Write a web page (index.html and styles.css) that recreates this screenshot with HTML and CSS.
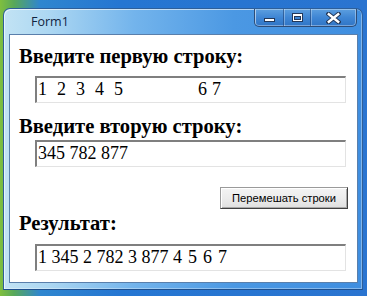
FILE: index.html
```html
<!DOCTYPE html>
<html>
<head>
<meta charset="utf-8">
<link rel="stylesheet" href="styles.css">
</head>
<body>
<div class="desktop">
  <div class="window">
    <div class="titlebar">
      <span class="title">Form1</span>
      <div class="caption">
        <div class="cbtn min"><span class="min-glyph"></span></div>
        <div class="cbtn max"><span class="max-glyph"></span></div>
        <div class="cbtn close">
          <svg width="15" height="12" viewBox="0 0 15 12">
            <path d="M2.5 2 L12.5 10 M12.5 2 L2.5 10" stroke="#23395a" stroke-width="4.4" stroke-linecap="square"/>
            <path d="M2.8 2.3 L12.2 9.7 M12.2 2.3 L2.8 9.7" stroke="#ffffff" stroke-width="2.4" stroke-linecap="square"/>
          </svg>
        </div>
      </div>
    </div>
    <div class="client">
      <div class="label l1">Введите первую строку:</div>
      <div class="field f1">1  2  3  4  5               6 7</div>
      <div class="label l2">Введите вторую строку:</div>
      <div class="field f2">345 782 877</div>
      <div class="button">Перемешать строки</div>
      <div class="label l3">Результат:</div>
      <div class="field f3">1 345 2 782 3 877 <span class="wide">4 5 6 7</span></div>
    </div>
  </div>
</div>
</body>
</html>
```
FILE: styles.css
```css
html, body {
  margin: 0;
  padding: 0;
}
.desktop {
  width: 367px;
  height: 296px;
  overflow: hidden;
  padding-top: 8px;
  box-sizing: border-box;
  background:
    linear-gradient(90deg, #7fbf3e 0px, #58a85a 14px, #2f86cf 40px, #2576d2 120px, #2a74d0 367px);
}
.window {
  margin-left: 3px;
  width: 360px;
  height: 282px;
  box-sizing: border-box;
  border: 1px solid #2e5f99;
  border-bottom-color: #1d4f8e;
  border-radius: 7px 7px 0 0;
  padding: 0 4px 6px 5px;
  background:
    linear-gradient(90deg, #c2e3f4 0px, #acd7f2 45px, #73b4ec 130px, #4b98e3 230px, #3f8ee0 360px);
  box-shadow: inset 1px 1px 0 rgba(255,255,255,0.6), inset -1px -1px 0 rgba(255,255,255,0.35);
  display: flex;
  flex-direction: column;
}
.titlebar {
  height: 25px;
  display: flex;
  justify-content: space-between;
  align-items: flex-start;
  margin-right: 1px;
}
.title {
  font-family: "Open Sans", "DejaVu Sans", sans-serif;
  font-size: 12.5px;
  color: #10243f;
  margin-left: 22px;
  margin-top: 5px;
  line-height: 15px;
}
.caption {
  display: flex;
  height: 17px;
  border: 1px solid #2d4d78;
  border-top: none;
  border-radius: 0 0 5px 5px;
  overflow: hidden;
  box-shadow: inset 0 0 0 1px rgba(255,255,255,0.35);
  background: linear-gradient(180deg, #5d9fdf 0%, #3f86d4 50%, #2f75c6 100%);
}
.cbtn {
  display: flex;
  align-items: center;
  justify-content: center;
  height: 17px;
  border-right: 1px solid rgba(30,60,110,0.55);
  box-shadow: inset 1px 0 0 rgba(255,255,255,0.3);
}
.cbtn.min { width: 28px; }
.cbtn.max { width: 26px; }
.cbtn.close { width: 45px; border-right: none; }
.min-glyph {
  width: 9px;
  height: 2px;
  margin-top: 5px;
  background: #ffffff;
  border: 1px solid #22385a;
}
.max-glyph {
  width: 7px;
  height: 4px;
  border: 1px solid #ffffff;
  border-top-width: 2px;
  outline: 1px solid #22385a;
  box-shadow: inset 0 0 0 1px #22385a;
}
.client {
  flex: 1;
  background: #ffffff;
  border: 1px solid #5a7fab;
  display: flex;
  flex-direction: column;
  align-items: flex-start;
}
.label {
  font-family: "Liberation Serif", "Times New Roman", serif;
  font-weight: bold;
  font-size: 20.6px;
  line-height: 20px;
  height: 20px;
  color: #000;
  margin-left: 9px;
  white-space: nowrap;
}
.l1 { margin-top: 11px; }
.l2 { margin-top: 13px; }
.l3 { margin-top: 4px; }
.field {
  box-sizing: border-box;
  margin-left: 25px;
  width: 311px;
  height: 27px;
  border-top: 2px solid #7f7f7f;
  border-left: 2px solid #7f7f7f;
  border-right: 1px solid #e3e3e3;
  border-bottom: 1px solid #e3e3e3;
  padding-left: 1px;
  font-family: "Liberation Serif", "Times New Roman", serif;
  font-size: 18px;
  line-height: 22px;
  color: #000;
  white-space: pre;
  overflow: hidden;
}
.f1 { margin-top: 10px; word-spacing: 0.5px; }
.f2 { margin-top: 4px; }
.f3 { margin-top: 11px; }
.wide { word-spacing: 1.5px; }
.button {
  align-self: flex-end;
  margin-right: 9px;
  margin-top: 20px;
  width: 128px;
  height: 22px;
  box-sizing: border-box;
  border: 1px solid #9a9a9a;
  border-right-color: #3f3f3f;
  border-bottom-color: #3f3f3f;
  box-shadow: inset 1px 1px 0 #ffffff, inset -1px -1px 0 #a8a8a8;
  background: linear-gradient(180deg, #f4f4f4 0%, #ececec 50%, #dfdfdf 100%);
  font-family: "Liberation Sans", Arial, sans-serif;
  font-size: 11.2px;
  line-height: 20px;
  text-align: center;
  color: #000;
}
```
